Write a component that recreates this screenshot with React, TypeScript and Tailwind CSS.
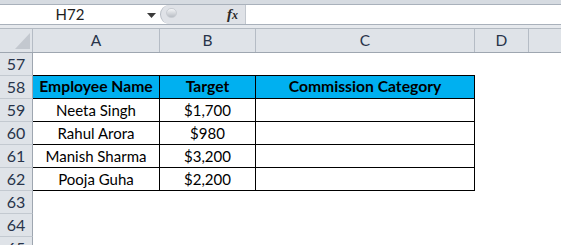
import React from "react";

const rows = [
  { n: 57 },
  { n: 58, head: true },
  { n: 59, a: "Neeta Singh", b: "$1,700" },
  { n: 60, a: "Rahul Arora", b: "$980" },
  { n: 61, a: "Manish Sharma", b: "$3,200" },
  { n: 62, a: "Pooja Guha", b: "$2,200" },
  { n: 63 },
  { n: 64 },
  { n: 65 },
];

export default function App() {
  const font = { fontFamily: "Lato, 'Open Sans', sans-serif" };
  return (
    <div className="w-[561px] h-[245px] overflow-hidden bg-white text-[15px] text-black" style={font}>
      {/* formula bar */}
      <div className="h-[4px] bg-[#d6dbe1]" />
      <div className="h-[21px] flex border-y border-[#a9b1bb] bg-white">
        <div className="w-[160px] flex items-center relative">
          <span className="w-[140px] text-center text-[15px] text-[#1d1d1d]">H72</span>
          <svg width="9" height="5" viewBox="0 0 9 5" className="absolute left-[147px] top-[8px]">
            <path d="M0 0 L9 0 L4.5 5 Z" fill="#3b3b3b" />
          </svg>
        </div>
        <div className="w-[85px] relative bg-[#dfe2e7] rounded-l-[10px] border-l border-[#b5bbc3] flex items-center justify-end pr-[7px]">
          <div className="absolute left-[5px] top-[3px] w-[11px] h-[10px] rounded-full bg-gradient-to-b from-[#f4f5f7] to-[#b9bec5] border border-[#c9cdd3]" />
          <span className="italic font-bold text-[15px] text-[#2a2a2a]" style={{ fontFamily: "'Liberation Serif', serif" }}>
            f<span className="text-[12px]">x</span>
          </span>
        </div>
        <div className="flex-1 border-l border-[#c2c7ce] bg-white" />
      </div>
      <div className="h-[3px] bg-[#e6e9ed] border-b border-[#b3bac2] box-content" />
      {/* column headers */}
      <div className="flex h-[24px] bg-[#dfe3e8] border-b border-[#9ea6b0] text-[#28344a] text-[15.5px]">
        <div className="w-[33px] border-r border-[#b5bcc5] relative">
          <svg width="15" height="16" viewBox="0 0 15 16" className="absolute left-[15px] top-[4px]">
            <path d="M15 0 L15 16 L0 16 Z" fill="#c3c8cf" />
          </svg>
        </div>
        <div className="w-[127px] border-r border-[#b5bcc5] flex items-center justify-center">A</div>
        <div className="w-[96px] border-r border-[#b5bcc5] flex items-center justify-center">B</div>
        <div className="w-[219px] border-r border-[#b5bcc5] flex items-center justify-center">C</div>
        <div className="w-[54px] border-r border-[#b5bcc5] flex items-center justify-center">D</div>
        <div className="flex-1" />
      </div>
      {/* rows */}
      {rows.map((r) => (
        <div key={r.n} className="flex h-[23px]">
          <div className="w-[33px] bg-[#dfe3e8] border-r border-[#9ea6b0] border-b border-b-[#c3c9d0] flex items-center justify-center text-[#28344a] text-[16px]">
            {r.n}
          </div>
          {r.head ? (
            <>
              <div className="w-[127px] bg-[#00b0f0] border-y border-black border-r flex items-center justify-center font-bold text-[15.7px] -mt-px h-[24px]">
                Employee Name
              </div>
              <div className="w-[96px] bg-[#00b0f0] border-y border-black border-r flex items-center justify-center font-bold text-[15.7px] -mt-px h-[24px]">
                Target
              </div>
              <div className="w-[219px] bg-[#00b0f0] border-y border-black border-r flex items-center justify-center font-bold text-[15.7px] -mt-px h-[24px]">
                Commission Category
              </div>
            </>
          ) : r.a ? (
            <>
              <div className="w-[127px] border-b border-r border-black flex items-center justify-center">{r.a}</div>
              <div className="w-[96px] border-b border-r border-black flex items-center justify-center">{r.b}</div>
              <div className="w-[219px] border-b border-r border-black" />
            </>
          ) : null}
          <div className="flex-1" />
        </div>
      ))}
    </div>
  );
}
